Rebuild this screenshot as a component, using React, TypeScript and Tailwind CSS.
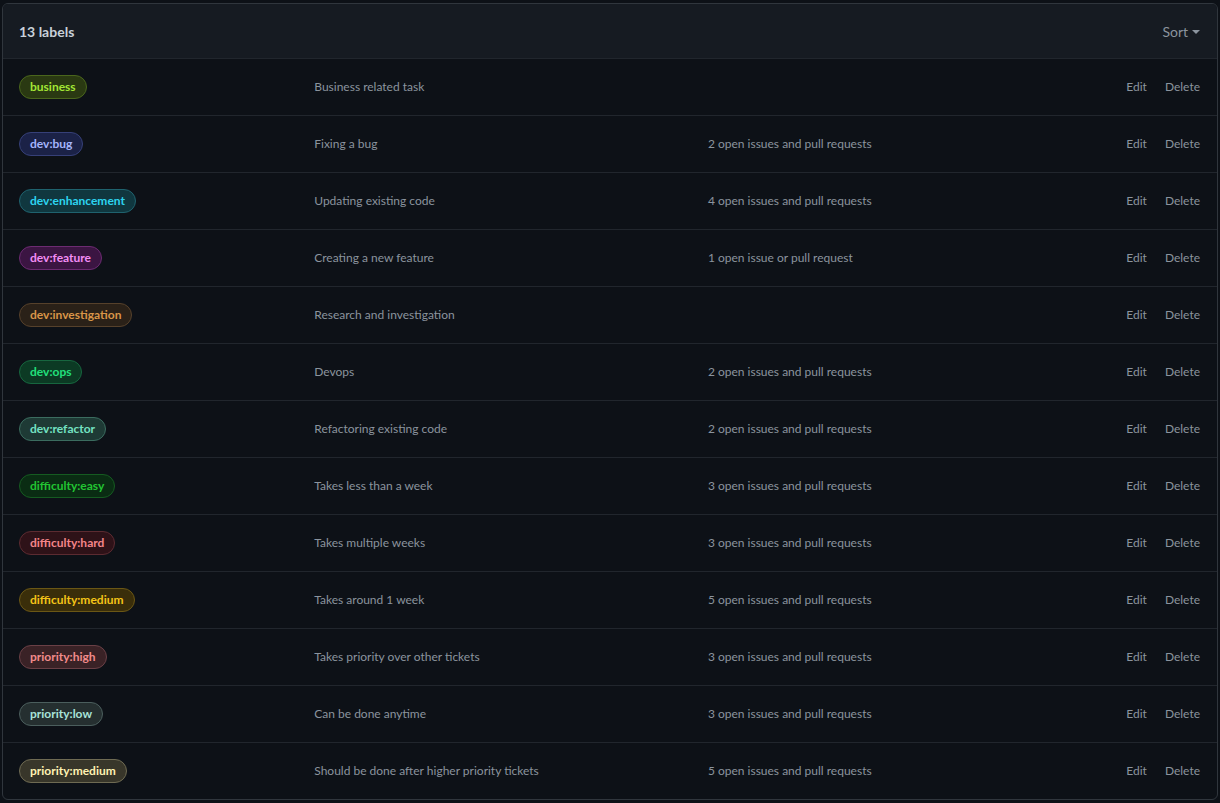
import React from 'react'

type Label = {
  name: string
  description: string
  issues?: string
  text: string
  bg: string
  border: string
}

const labels: Label[] = [
  { name: 'business', description: 'Business related task', text: 'text-[#a3e635]', bg: 'bg-[#2a3912]', border: 'border-[#4a661c]' },
  { name: 'dev:bug', description: 'Fixing a bug', issues: '2 open issues and pull requests', text: 'text-[#a5b4fc]', bg: 'bg-[#1b2247]', border: 'border-[#364078]' },
  { name: 'dev:enhancement', description: 'Updating existing code', issues: '4 open issues and pull requests', text: 'text-[#2dd4f0]', bg: 'bg-[#10373f]', border: 'border-[#1f626e]' },
  { name: 'dev:feature', description: 'Creating a new feature', issues: '1 open issue or pull request', text: 'text-[#f38cf4]', bg: 'bg-[#3b1542]', border: 'border-[#6c2b72]' },
  { name: 'dev:investigation', description: 'Research and investigation', text: 'text-[#d99548]', bg: 'bg-[#2a2118]', border: 'border-[#56412b]' },
  { name: 'dev:ops', description: 'Devops', issues: '2 open issues and pull requests', text: 'text-[#22e07c]', bg: 'bg-[#0c3a24]', border: 'border-[#17663f]' },
  { name: 'dev:refactor', description: 'Refactoring existing code', issues: '2 open issues and pull requests', text: 'text-[#74e2c2]', bg: 'bg-[#1e3a35]', border: 'border-[#3b6c5f]' },
  { name: 'difficulty:easy', description: 'Takes less than a week', issues: '3 open issues and pull requests', text: 'text-[#22c532]', bg: 'bg-[#0a2c13]', border: 'border-[#155b21]' },
  { name: 'difficulty:hard', description: 'Takes multiple weeks', issues: '3 open issues and pull requests', text: 'text-[#f4858a]', bg: 'bg-[#2e1218]', border: 'border-[#5c2b31]' },
  { name: 'difficulty:medium', description: 'Takes around 1 week', issues: '5 open issues and pull requests', text: 'text-[#f5c518]', bg: 'bg-[#3a2e0a]', border: 'border-[#6b5715]' },
  { name: 'priority:high', description: 'Takes priority over other tickets', issues: '3 open issues and pull requests', text: 'text-[#f28b8b]', bg: 'bg-[#3a2226]', border: 'border-[#6a4046]' },
  { name: 'priority:low', description: 'Can be done anytime', issues: '3 open issues and pull requests', text: 'text-[#a8e2d8]', bg: 'bg-[#252f30]', border: 'border-[#4b5e5d]' },
  { name: 'priority:medium', description: 'Should be done after higher priority tickets', issues: '5 open issues and pull requests', text: 'text-[#fff2b3]', bg: 'bg-[#38362a]', border: 'border-[#6f6b53]' },
]

export default function App() {
  return (
    <div className="min-h-screen bg-[#0d1117] pt-[3px] px-[2px] font-['Lato','Noto_Sans',sans-serif]">
      <div className="rounded-md border border-[#30363d] overflow-hidden">
        {/* Header */}
        <div className="flex h-[54px] items-center justify-between bg-[#161b22] pl-4 pr-[17px]">
          <h3 className="text-[14px] font-bold text-[#c9d1d9]">13 labels</h3>
          <button className="flex items-center gap-[4px] text-[14px] text-[#8b949e]">
            Sort
            <svg width="8" height="4" viewBox="0 0 8 4" className="mt-[1px]">
              <path d="M0 0h8L4 4z" fill="#8b949e" />
            </svg>
          </button>
        </div>

        {/* Rows */}
        {labels.map((l) => (
          <div
            key={l.name}
            className="flex h-[57px] items-center border-t border-[#21262d] pl-4 pr-[17px] text-[12px]"
          >
            <div className="w-1/4">
              <span
                className={`inline-flex h-[24px] items-center rounded-full border px-[10px] font-bold ${l.text} ${l.bg} ${l.border}`}
              >
                {l.name}
              </span>
            </div>
            <div className="w-1/3 text-[#8b949e]">{l.description}</div>
            <div className="w-1/4 text-[#8b949e]">{l.issues}</div>
            <div className="flex flex-1 justify-end gap-[18px] text-[#8b949e]">
              <span>Edit</span>
              <span>Delete</span>
            </div>
          </div>
        ))}
      </div>
    </div>
  )
}
